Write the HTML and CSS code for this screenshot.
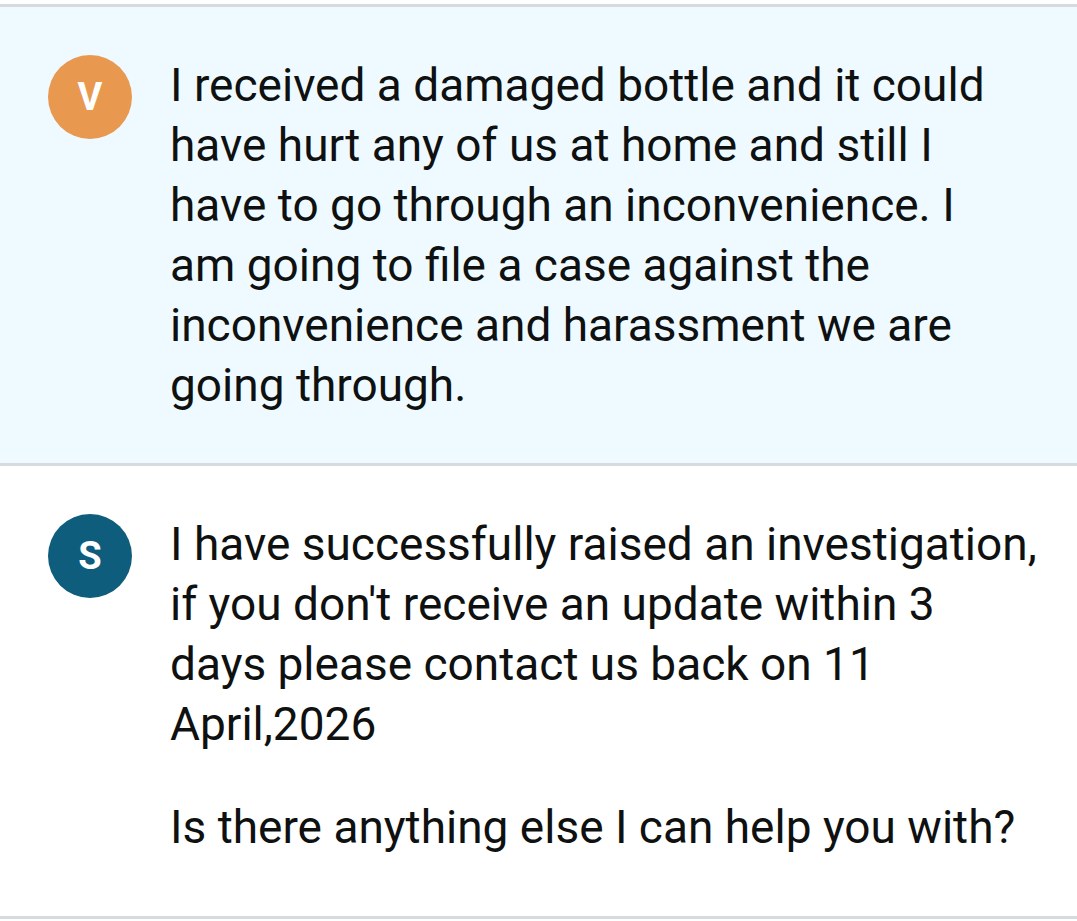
FILE: index.html
```html
<!DOCTYPE html>
<html lang="en">
<head>
<meta charset="utf-8">
<title>Chat</title>
<link rel="stylesheet" href="styles.css">
</head>
<body>
<div class="thread">
  <div class="message message--customer">
    <div class="avatar avatar--v">V</div>
    <div class="message-body">
      <p>I received a damaged bottle and it could have hurt any of us at home and still I have to go through an inconvenience. I am going to file a case against the inconvenience and harassment we are going through.</p>
    </div>
  </div>
  <div class="message message--agent">
    <div class="avatar avatar--s">S</div>
    <div class="message-body">
      <p>I have successfully raised an investigation, if you don't receive an update within 3 days please contact us back on 11 April,2026</p>
      <p>Is there anything else I can help you with?</p>
    </div>
  </div>
</div>
</body>
</html>
```
FILE: styles.css
```css
html, body {
  margin: 0;
  padding: 0;
  background: #ffffff;
}
body {
  font-family: "Roboto", "Liberation Sans", sans-serif;
  color: #0f1111;
  padding-top: 4px;
}
.thread {
  display: flex;
  flex-direction: column;
  border-top: 3px solid #d5dbdf;
}
.message {
  display: flex;
  align-items: flex-start;
  gap: 38px;
  padding: 48px 77px 48px 48px;
  border-bottom: 3px solid #d5dbdf;
}
.message--customer {
  background: #eefaff;
}
.message--agent {
  background: #ffffff;
  padding-right: 37px;
  padding-bottom: 59px;
}
.avatar {
  flex: 0 0 84px;
  width: 84px;
  height: 84px;
  border-radius: 50%;
  display: flex;
  align-items: center;
  justify-content: center;
  color: #ffffff;
  font-weight: 700;
  font-size: 38px;
  line-height: 1;
}
.avatar--v { background: #e9994f; }
.avatar--s { background: #0f5d7c; }
.message-body {
  flex: 1;
  font-size: 46px;
  line-height: 60px;
}
.message-body p {
  margin: 0;
}
.message-body p + p {
  margin-top: 43px;
}
```
